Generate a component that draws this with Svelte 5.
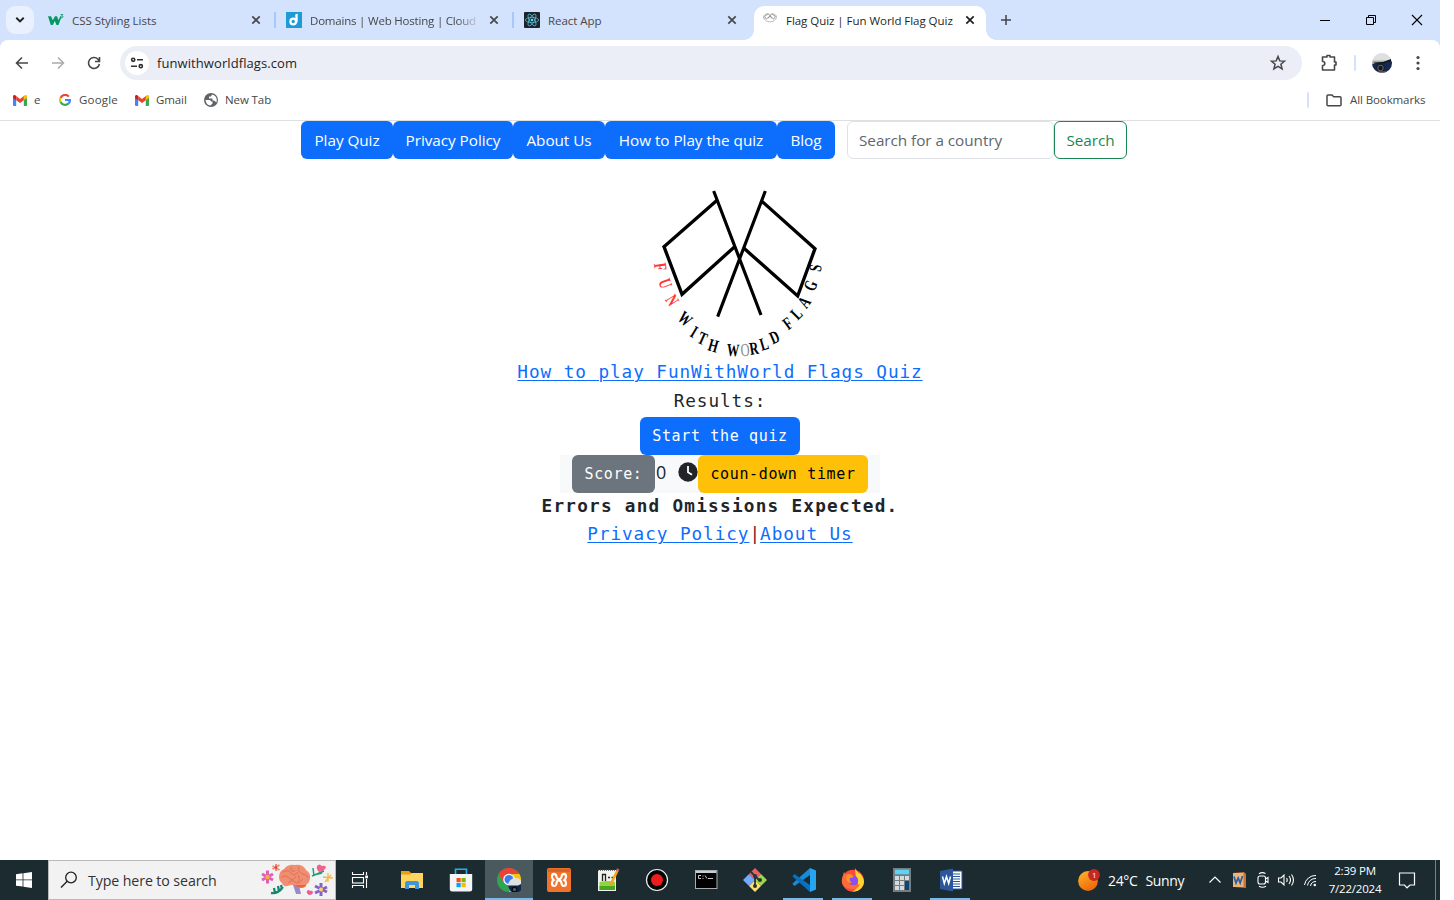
<script>
  const tabs = [
    { icon: 'w3', title: 'CSS Styling Lists' },
    { icon: 'd', title: 'Domains | Web Hosting | Cloud', fade: true },
    { icon: 'react', title: 'React App' },
    { icon: 'flag', title: 'Flag Quiz | Fun World Flag Quiz', active: true }
  ];
  const nav = [
    { label: 'Play Quiz', w: 92 },
    { label: 'Privacy Policy', w: 120 },
    { label: 'About Us', w: 92 },
    { label: 'How to Play the quiz', w: 172 },
    { label: 'Blog', w: 58 }
  ];
  const ring = [
    ['F', 62, 260], ['U', 77, 310], ['N', 97, 360], ['W', 136, 416], ['I', 163, 455], ['T', 188, 475],
    ['H', 220, 496], ['W', 279, 510], ['O', 315, 509], ['R', 342, 504], ['L', 372, 491], ['D', 403, 471],
    ['F', 443, 430], ['L', 469, 400], ['A', 492, 366], ['G', 511, 316], ['S', 525, 264]
  ].map(([ch, x, y], i) => ({ ch, x, y, red: i < 3, thin: i === 8, a: (Math.atan2(297 - x, y - 230) * 180) / Math.PI }));
  const apps = ['tasks', 'folder', 'store', 'chrome', 'xampp', 'npp', 'rec', 'cmd', 'git', 'code', 'firefox', 'calc', 'word'];
  const running = ['code', 'firefox', 'word'];
</script>

{#snippet closeX()}
  <svg class="x" width="10" height="10" viewBox="0 0 10 10"><path d="M1.3 1.3l7.4 7.4M8.7 1.3L1.3 8.7" stroke="currentColor" stroke-width="1.7" /></svg>
{/snippet}

{#snippet gmail()}
  <svg width="14" height="11" viewBox="0 0 14 11">
    <path d="M0 2v8a1 1 0 0 0 1 1h2.2V4z" fill="#4285f4" /><path d="M14 2v8a1 1 0 0 1-1 1h-2.2V4z" fill="#34a853" />
    <path d="M10.8 1.1v4.2L14 3V1.6C14 0 12.4-.3 11.5.4z" fill="#fbbc04" /><path d="M0 1.6V3l3.2 2.3V1L2.5.4C1.5-.3 0 .1 0 1.6z" fill="#c5221f" />
    <path d="M3.2 1.1L7 4l3.8-2.9v4.2L7 8.1 3.2 5.3z" fill="#ea4335" />
  </svg>
{/snippet}

{#snippet avatar()}
  <svg width="20" height="20" viewBox="0 0 20 20">
    <defs><clipPath id="av"><circle cx="10" cy="10" r="10" /></clipPath></defs>
    <g clip-path="url(#av)"><rect width="20" height="20" fill="#dedfe0" /><path d="M0 7.500h20v3H0z" fill="#a9b39b" /><path d="M0 11l7-1.500h7l4-2 2 1v12H0z" fill="#15294e" /><path d="M2 9.500l9-.5 8-3v2l-7 2.500H2z" fill="#10151f" /><circle cx="8.5" cy="15" r="4" fill="#15181d" /><circle cx="8.5" cy="15" r="2.800" fill="none" stroke="#6b6b6b" /><path d="M0 18.500h20v2H0z" fill="#777" /></g>
  </svg>
{/snippet}

{#snippet favicon(name)}
  {#if name === 'w3'}
    <svg width="16" height="16" viewBox="0 0 16 16"><path d="M0 4.300h3l1.800 4 2.200-4h2l1.500 4 1.700-4h1.500L10.500 13h-2L6.800 9l-2 4h-2z" fill="#059862" /><path d="M12.600 2.500h2.200l-1 1.200c1.600 0 1.500 2.200-.2 2.100l-1-.3" fill="none" stroke="#059862" stroke-width=".9" /></svg>
  {:else if name === 'd'}
    <svg width="16" height="16" viewBox="0 0 16 16"><rect width="16" height="16" fill="#1e9ad6" /><circle cx="7.2" cy="9.5" r="2.8" fill="none" stroke="#fff" stroke-width="2.2" /><path d="M9.2 2.4l2.5-.9v8.3l-2 2.3z" fill="#fff" /></svg>
  {:else if name === 'react'}
    <svg width="16" height="16" viewBox="0 0 16 16"><rect width="16" height="16" rx="1" fill="#20232a" /><g fill="none" stroke="#53bdd2" stroke-width=".8"><ellipse cx="8" cy="8" rx="6.6" ry="2.6" /><ellipse cx="8" cy="8" rx="6.6" ry="2.6" transform="rotate(60 8 8)" /><ellipse cx="8" cy="8" rx="6.6" ry="2.6" transform="rotate(120 8 8)" /></g><circle cx="8" cy="8" r="1.3" fill="#61dafb" /></svg>
  {:else}
    <svg class="up" width="16" height="16" viewBox="0 0 16 16"><g fill="none" stroke="#888" stroke-width=".8"><path d="M6.300 3.500l3.500 5M9.700 3.500l-3.500 5M6.500 4L2.500 6.200l1.800 2.900 3.200-2.800M9.500 4l4 2.200-1.800 2.900-3.200-2.800" /><path d="M1.500 7c1 6.500 12 6.500 13 0M1.500 7c0-2 2-3 4.500-3.400M14.500 7c0-2-2-3-4.500-3.400" stroke="#aaa" /></g><path d="M1.300 7l1 2" stroke="#efa0a0" stroke-width=".8" /></svg>
  {/if}
{/snippet}

{#snippet appIcon(name)}
  <svg width="24" height="24" viewBox="0 0 24 24">
    {#if name === 'tasks'}
      <g fill="none" stroke="#fff" stroke-width="1.100"><path d="M4.500 4v2.500h11V4M4.500 20v-2.500h11V20" /><rect x="4.500" y="9.500" width="11" height="5.500" /><path d="M18.500 4v3M18.500 11v9" /></g><rect x="17.200" y="7.500" width="2.800" height="2.800" fill="#fff" />
    {:else if name === 'folder'}
      <path d="M1 3h8l2 2h12v15H1z" fill="#eba10c" /><path d="M1 6.500h9l2-1.500h11v15H1z" fill="#ffd45f" /><path d="M5 21v-6.500L6.500 13h11l1.500 1.500V21h-4v-4H9v4z" fill="#3f96d8" />
    {:else if name === 'store'}
      <path d="M6.500 7V1.200h11V7" fill="none" stroke="#25b1ec" stroke-width="1.600" /><path d="M.8 6h22.400v15a2.500 2.500 0 0 1-2.500 2.500H3.300A2.500 2.500 0 0 1 .8 21z" fill="#f4f5f6" /><rect x="7.500" y="10" width="4.200" height="4.200" fill="#f25022" /><rect x="12.500" y="10" width="4.200" height="4.200" fill="#7fba00" /><rect x="7.500" y="15" width="4.200" height="4.200" fill="#00a4ef" /><rect x="12.500" y="15" width="4.200" height="4.200" fill="#ffb900" />
    {:else if name === 'chrome'}
      <circle cx="12" cy="12" r="12" fill="#2da64f" /><path d="M1.600 6A12 12 0 0 1 22.400 6H12L6.800 15z" fill="#ea4335" /><path d="M22.400 6A12 12 0 0 1 12 24l5.200-9-2-9z" fill="#fbc116" /><circle cx="12" cy="11.500" r="5.800" fill="#fff" /><circle cx="12" cy="11.500" r="4.500" fill="#3b7ded" />
      <g transform="translate(11 10)"><circle cx="7.500" cy="7.500" r="7.500" fill="#dfe2e3" /><path d="M0 7.500h10l4-2 1 2a7.500 7.500 0 0 1-15 0z" fill="#12284b" /><circle cx="6.500" cy="11.500" r="3" fill="#0b0e13" /><circle cx="6.500" cy="11.500" r="1.600" fill="#596169" /></g>
    {:else if name === 'xampp'}
      <rect width="24" height="24" rx="2" fill="#f1732b" /><path d="M1 1h22v3H1z" fill="#ce692b" /><path d="M9.500 8.500Q9 5.800 7 5.800 4.800 6 5 8.800q.2 2 1.700 3.200Q5 13 5 15.500T7.300 18q2-.2 2.200-3M14.500 8.500q.5-2.700 2.500-2.700 2.200.2 2 3-.2 2-1.700 3.200Q19 13 19 15.500T16.700 18q-2-.2-2.200-3M9.500 8.500q.3 2.700 2.500 2.700t2.500-2.700M9.500 15q.3-2.500 2.500-2.500t2.500 2.500" fill="none" stroke="#fff" stroke-width="2.200" />
    {:else if name === 'npp'}
      <path d="M2 2h18v21H2z" fill="#f0f4ec" /><path d="M3.500 14q8-2 15.500 0v8H3.500z" fill="#8fd53c" /><path d="M3.500 18h15.500v4H3.500z" fill="#4ba527" /><path d="M2 2h18" stroke="#444" stroke-width="1.500" stroke-dasharray="1 1" /><path d="M6.500 13V6.500h3V13M12 9.500h2M15.500 9.500h1.500" fill="none" stroke="#222" stroke-width="1.300" /><path d="M21.500 2.500L14.500 17" stroke="#f2a51d" stroke-width="2.600" /><path d="M22.300 .8l-1 2" stroke="#dc5d61" stroke-width="2.600" />
    {:else if name === 'rec'}
      <circle cx="12" cy="12" r="10.500" fill="#050505" stroke="#eee" stroke-width="1.200" /><circle cx="12" cy="12" r="6" fill="#ee1c1c" />
    {:else if name === 'cmd'}
      <rect x="1.500" y="2.500" width="21.500" height="18" fill="#020202" stroke="#a9adb0" /><path d="M2 3h20.500v2H2z" fill="#c9ced5" /><path d="M7 7.500H4.500v3H7M9 7.500v1M9 10v1M11 7.500l2 3M14 10.500h5" fill="none" stroke="#ddd" stroke-width=".9" />
    {:else if name === 'git'}
      <path d="M12 0l6 6-6 6-6-6z" fill="#f05e65" /><path d="M6 6l6 6-6 6-6-6z" fill="#72aaff" /><path d="M18 6l6 6-6 6-6-6z" fill="#a0d64c" /><path d="M12 12l6 6-6 6-6-6z" fill="#ffde70" /><path d="M8 4l4 4v10M12 8l5 5" fill="none" stroke="#263437" stroke-width="1.800" /><circle cx="12" cy="8" r="2" fill="#263437" /><circle cx="12" cy="18" r="2" fill="#263437" /><circle cx="17" cy="12" r="2" fill="#263437" />
    {:else if name === 'code'}
      <path d="M18 0L.3 15.800l2.200 2.200L18 7z" fill="#168cd8" /><path d="M2.500 6L.3 8.200 18 24v-7z" fill="#0870bf" /><path d="M18 0l6 2.500v19L18 24z" fill="#27a4ef" />
    {:else if name === 'firefox'}
      <circle cx="12" cy="12.800" r="11" fill="#ff493d" /><path d="M14.500 0q1 4 5 6 6.500 8 1 14-4 4-9 3.500 7-3 5-11-3-6-2-12.500z" fill="#ffd431" /><path d="M3 4l2 3q2-2 5-1l3 3-5 2 1 3q5 5 10 2-2 6-8 5Q-2 20 1.500 9z" fill="#ff6a3a" /><circle cx="12.300" cy="12.500" r="4.800" fill="#8950ed" /><path d="M5 7q3-2 6 0l2 2-4 1q-1 3 2 5-6 1-6-8z" fill="#ff9427" />
    {:else if name === 'calc'}
      <rect x="3" width="18" height="24" fill="#757d83" /><rect x="5" y="1.700" width="14" height="4.500" fill="#5bd5f7" /><g fill="#d5dade"><path d="M5 8h4v4H5zM10 8h4v4h-4zM15 8h4v4h-4zM5 13h4v4H5zM10 13h4v4h-4zM5 18h4v4H5zM10 18h4v4h-4z" /></g><path d="M15 13h4v9h-4z" fill="#0a4675" />
    {:else}
      <path d="M12 3h11v18H12z" fill="#fff" stroke="#31549b" /><path d="M14 6h7M14 8.500h7M14 11h7M14 13.500h7M14 16h7M14 18.500h7" stroke="#2c579a" /><path d="M1 3l13-2.500v23L1 21z" fill="#2b579a" /><path d="M3.500 8.500l1.800 7 2.200-7 2.200 7 1.800-7" fill="none" stroke="#fff" stroke-width="1.500" />
    {/if}
  </svg>
{/snippet}

<div class="screen">
  <header>
    <div class="strip">
      <div class="drop"><svg width="10" height="6" viewBox="0 0 10 6"><path d="M1.300 .8L5 4.400 8.700 .8" fill="none" stroke="#1f1f1f" stroke-width="1.900" /></svg></div>
      {#each tabs as t, i}
        <div class="tab" class:active={t.active} class:sep={i < 2}>
          {@render favicon(t.icon)}<span class:fade={t.fade}>{t.title}</span>{@render closeX()}
        </div>
      {/each}
      <svg class="plus" width="12" height="12" viewBox="0 0 12 12"><path d="M6 1v10M1 6h10" stroke="#444" stroke-width="1.500" /></svg>
      <div class="win">
        <svg width="12" height="12" viewBox="0 0 12 12"><path d="M1 6.500h10" stroke="#000" /></svg>
        <svg width="12" height="12" viewBox="0 0 12 12"><path d="M1.500 3.500h7v7h-7zM3.500 3.500v-2h7v7h-2" fill="none" stroke="#000" /></svg>
        <svg width="12" height="12" viewBox="0 0 12 12"><path d="M1 1l10 10M11 1L1 11" stroke="#000" stroke-width="1.100" /></svg>
      </div>
    </div>
    <div class="bar"><div class="tools">
      <svg width="14" height="14" viewBox="0 0 14 14"><path d="M13 7H2M7 1.500L1.500 7 7 12.500" fill="none" stroke="#474747" stroke-width="1.600" /></svg>
      <svg width="14" height="14" viewBox="0 0 14 14"><path d="M1 7h11M7 1.500L12.500 7 7 12.500" fill="none" stroke="#ababab" stroke-width="1.500" /></svg>
      <svg width="14" height="14" viewBox="0 0 14 14"><path d="M12.400 8A5.500 5.500 0 1 1 11 3.200L12.400 5M12.500 1v4.500H8" fill="none" stroke="#474747" stroke-width="1.600" /></svg>
      <div class="omni">
        <div class="site"><svg width="14" height="12" viewBox="0 0 14 12"><g fill="none" stroke="#303030" stroke-width="1.600"><circle cx="3.200" cy="2.800" r="1.600" /><path d="M7 2.800h6M1 9.200h6" /><circle cx="10.800" cy="9.200" r="1.600" /></g></svg></div>
        <span>funwithworldflags.com</span>
        <svg class="star" width="18" height="18" viewBox="0 0 18 18"><path d="M9 2.500l1.800 4.400 4.700.3-3.600 3.100 1.200 4.600L9 12.400l-4.100 2.500 1.200-4.600-3.600-3.100 4.700-.3z" fill="none" stroke="#474747" stroke-width="1.500" /></svg>
      </div>
      <svg class="puz" width="18" height="18" viewBox="0 0 18 18"><path d="M2.500 3h4.500V1.500h3V3h4.500v5h1.500v3h-1.500v5h-12v-4.300q2.300-.4 2.300-2.200T2.500 7.300z" fill="none" stroke="#474747" stroke-width="1.600" stroke-linejoin="round" /></svg>
      <i class="vr"></i>
      <div class="ava">{@render avatar()}</div>
      <svg class="dots" width="4" height="16" viewBox="0 0 4 16"><g fill="#474747"><circle cx="2" cy="2.500" r="1.600" /><circle cx="2" cy="8" r="1.600" /><circle cx="2" cy="13.500" r="1.600" /></g></svg>
    </div></div>
    <div class="marks">
      <div class="bm e">{@render gmail()}<span>e</span></div>
      <div class="bm goog"><svg width="12" height="12" viewBox="0 0 12 12"><g fill="none" stroke-width="2.200"><path d="M9.800 2.600A4.900 4.900 0 0 0 1.600 3.900" stroke="#ea4335" /><path d="M1.600 3.800a4.900 4.900 0 0 0 0 4.400" stroke="#fbbc04" /><path d="M1.600 8.100a4.900 4.900 0 0 0 7.800 1.400" stroke="#34a853" /><path d="M6 6h4.900Q11 8.300 9.400 9.600" stroke="#4285f4" /></g></svg><span>Google</span></div>
      <div class="bm gm">{@render gmail()}<span>Gmail</span></div>
      <div class="bm nt"><svg width="14" height="14" viewBox="0 0 14 14"><circle cx="7" cy="7" r="7" fill="#5f6368" /><path d="M1.500 7h4q1.500 0 1.500 1.500h1.500v2l-2 2Q2 12 1.500 7zM8 1.500l-1 2H5V5.500h3.500v2H10l2.500 2q1-5-2-7z" fill="#fff" /></svg><span>New Tab</span></div>
      <i class="vr"></i>
      <svg class="fold" width="16" height="13" viewBox="0 0 16 13"><path d="M1 10.800V2q0-1 1-1h4l1.700 1.700H14q1 0 1 1v7q0 1-1 1H2q-1 0-1-1z" fill="none" stroke="#474747" stroke-width="1.500" /></svg>
      <span class="all">All Bookmarks</span>
    </div>
  </header>

  <nav>
    {#each nav as n}<div class="btn" style:width="{n.w}px"><span>{n.label}</span></div>{/each}
    <div class="field"><span>Search for a country</span></div>
    <div class="go"><span>Search</span></div>
  </nav>

  <main>
    <svg class="logo" width="200" height="180" viewBox="0 0 600 540">
      <g fill="none" stroke="#000" stroke-width="10">
        <path d="M221 33L363 405M376 33L233 410" stroke-width="9.500" />
        <path d="M232 60L72 200 126 343 284 200" />
        <path d="M367 65L525 206 473 348 312 205" />
      </g>
      {#each ring as r}
        <text x="0" y="17" class:red={r.red} class:thin={r.thin} transform="translate({r.x} {r.y}) rotate({r.a}) scale(.76 1.100)">{r.ch}</text>
      {/each}
    </svg>
    <div class="line"><span class="lnk">How to play FunWithWorld Flags Quiz</span></div>
    <div class="line res">Results:</div>
    <div class="start"><span>Start the quiz</span></div>
    <div class="score">
      <div class="sc"><span>Score:</span></div>
      <b class="zero">0</b>
      <svg width="20" height="20" viewBox="0 0 20 20"><circle cx="10" cy="10" r="9.700" fill="#212529" /><path d="M10 4v6.200l4 2.600" fill="none" stroke="#fff" stroke-width="1.800" /></svg>
      <div class="timer"><span>coun-down timer</span></div>
    </div>
    <div class="line err">Errors and Omissions Expected.</div>
    <div class="line pp"><span class="lnk">Privacy Policy</span><em>|</em><span class="lnk">About Us</span></div>
  </main>

  <footer>
    <div class="win-key"><svg width="16" height="16" viewBox="0 0 16 16"><path d="M0 2.200L6.600 1.300v6.200H0zM7.400 1.200L16 0v7.500H7.400zM0 8.300h6.600v6.300L0 13.700zM7.400 8.300H16V16l-8.600-1.200z" fill="#fff" /></svg></div>
    <div class="find">
      <svg width="18" height="18" viewBox="0 0 18 18"><circle cx="11" cy="6.500" r="5.300" fill="none" stroke="#222" stroke-width="1.300" /><path d="M7.200 10.300L1 16.500" stroke="#222" stroke-width="1.400" /></svg>
      <span>Type here to search</span>
      <svg class="brain" width="74" height="34" viewBox="0 0 74 34">
        <path d="M33 22l3 9h5l-2-9z" fill="#9b8ac8" /><path d="M36 23q6 4 10 0l1-5-12 1z" fill="#f0623e" />
        <path d="M19 14q0-6 5-8 4-5 11-4 8-1 11 5 5 3 4 9-1 5-5 6H31q-8 3-9-2-3-2-3-6z" fill="#f08e72" />
        <path d="M23 9q5-3 8 1t7-1M21 15q4-4 8 0t7-2M31 4q-1 5 4 4M39 4q-2 5 4 7t5 4M28 20q4-4 7-1t8-3M38 12q3 4 0 7" fill="none" stroke="#d8694f" stroke-width=".8" />
        <g stroke="#df5fb6" stroke-width="3"><path d="M7.500 7.500v13M2 11l11 6M2 17l11-6" /></g><circle cx="7.500" cy="14" r="2.200" fill="#f4ae3b" />
        <g stroke="#f08a78" stroke-width="2"><path d="M16 1v7M12.500 3l7 4M12.500 6l7-4" /></g><circle cx="16" cy="4.500" r="1.200" fill="#b94848" />
        <g stroke="#8564c7" stroke-width="3"><path d="M61 20v13M55 23l12 6M55 30l12-6" /></g><circle cx="61" cy="26.500" r="2" fill="#ffd25c" />
        <path d="M57 3q2-3 5 0 3-1 4 1-1 4-7 5-3-3-2-6z" fill="#ef6290" /><path d="M53 5l1 8M54 12l8-2M52 13l12-5" stroke="#249c7b" stroke-width="1.500" />
        <path d="M11 30q7 1 12-6M14 25l1 5M18 23l1 5M21 22l1 4" fill="none" stroke="#16876b" stroke-width="2.300" />
        <path d="M47 28q2-2 3 0 2-1 3 1 0 3-4 3-3-2-2-4z" fill="#f15a97" /><path d="M68 10v9M63 14l10 1M65 19l6-7" stroke="#f2b840" stroke-width="1.300" />
      </svg>
    </div>
    {#each apps as a}
      <div class="app {a}" class:run={running.includes(a)} class:cur={a === 'chrome'}>{@render appIcon(a)}</div>
    {/each}
    <div class="weather">
      <svg width="22" height="22" viewBox="0 0 22 22"><defs><linearGradient id="sun" x2=".6" y2="1"><stop stop-color="#ffb62b" /><stop offset="1" stop-color="#ed670c" /></linearGradient></defs><circle cx="10" cy="12" r="9.900" fill="url(#sun)" /><circle cx="16" cy="6" r="5.900" fill="#c8281f" /><text x="16" y="9" font-size="8" text-anchor="middle" fill="#fff">1</text></svg>
      <span>24°C</span><span class="sunny">Sunny</span>
    </div>
    <div class="tray">
      <svg width="14" height="10" viewBox="0 0 14 10"><path d="M1.500 7.500L7 2l5.500 5.500" fill="none" stroke="#fff" stroke-width="1.200" /></svg>
      <svg width="14" height="16" viewBox="0 0 14 16"><path d="M1 1l11-1 2 2v14L2 15z" fill="#ce7233" /><path d="M1 1h10.500v14H1z" fill="#efb477" /><path d="M2 4.500L4 11 6.200 6l2 5L10.500 4" fill="none" stroke="#2260a7" stroke-width="1.700" /></svg>
      <svg width="14" height="18" viewBox="0 0 14 18"><g fill="none" stroke="#fff" stroke-width="1.100"><rect x="2" y="5" width="7.500" height="8" rx="2" /><path d="M9.500 8l2.500-1.500v5L9.500 10M3 2.800Q6 .5 9.500 2.500M3 15.200q3.500 2 7 0" /></g></svg>
      <svg width="18" height="16" viewBox="0 0 18 16"><g fill="none" stroke="#fff" stroke-width="1.100"><path d="M1.500 6H4l3-3v10l-3-3H1.500zM9.500 6q1.500 2 0 4M12 4q3 4 0 8M14.500 2.500q4 5.500 0 11" /></g></svg>
      <svg width="14" height="14" viewBox="0 0 14 14"><g fill="none" stroke="#fff" stroke-width="1"><path d="M1.500 12A11 11 0 0 1 13 2.500M4.500 12.500A8 8 0 0 1 13 5.500M7.500 13A5.500 5.500 0 0 1 13 8.500" /></g><circle cx="11.800" cy="12" r="1.300" fill="#fff" /></svg>
    </div>
    <div class="clock"><span>2:39 PM</span><span class="date">7/22/2024</span></div>
    <svg class="note" width="18" height="18" viewBox="0 0 18 18"><path d="M1.500 2h15v12H12l-3 2.800L6.500 14h-5z" fill="none" stroke="#fff" stroke-width="1.200" /></svg>
    <i class="peek"></i>
  </footer>
</div>

<style>
  :global(body) { margin: 0; background: #fff; overflow: hidden; }
  .screen { width: 1440px; height: 900px; display: flex; flex-direction: column; font-family: 'Open Sans', 'Noto Sans', sans-serif; color: #212529; }
  svg { display: block; flex: none; }
  span, .line { white-space: nowrap; }
  header { height: 120px; border-bottom: 1px solid #dfe0e1; background: #fff; flex: none; }
  .strip { height: 40px; background: #d3e2fd; display: flex; align-items: center; }
  .drop { width: 28px; height: 28px; border-radius: 9px; background: #e9f0fe; margin: 0 6px; display: grid; place-items: center; }
  .tab { width: 238px; height: 40px; box-sizing: border-box; padding: 0 19px 0 8px; display: flex; align-items: center; color: #474747; font-size: 11.5px; letter-spacing: -.04px; position: relative; }
  .tab > span { margin-left: 8px; flex: none; width: 167px; overflow: hidden; line-height: 20px; padding-top: 1px; }
  .tab .x { margin-left: 12px; }
  .tab .fade { mask-image: linear-gradient(90deg, #000 88%, transparent 102%); letter-spacing: -.2px; }
  .sep { background: linear-gradient(#a8c7fa, #a8c7fa) 234px 12px / 2px 16px no-repeat; }
  .active { width: 232px; height: 34px; margin: 6px 0 0; padding: 0 11px 6px 8px; background: #fff; border-radius: 10px 10px 0 0; color: #1f1f1f; }
  .active::before, .active::after { content: ''; position: absolute; bottom: 0; width: 10px; height: 10px; }
  .active::before { left: -10px; background: radial-gradient(circle at 0 0, transparent 9.500px, #fff 10px); }
  .active::after { right: -10px; background: radial-gradient(circle at 100% 0, transparent 9.500px, #fff 10px); }
  .up { margin-top: -4px; }
  .plus { margin-left: 14px; }
  .win { margin-left: auto; display: flex; gap: 34px; padding-right: 17px; }
  .bar { background: #d3e2fd; }
  .tools { height: 46px; display: flex; align-items: center; padding-left: 15px; border-radius: 8px 8px 0 0; background: #fff; }
  .tools > svg:nth-child(2), .tools > svg:nth-child(3) { margin-left: 22px; }
  .omni { width: 1182px; height: 34px; margin-left: 19px; border-radius: 17px; background: #ebeef7; display: flex; align-items: center; font-size: 13px; letter-spacing: .08px; color: #1f1f1f; box-sizing: border-box; padding: 0 15px 0 5px; flex: none; }
  .site { width: 24px; height: 24px; border-radius: 50%; background: #fff; display: grid; place-items: center; margin-right: 8px; }
  .star { margin-left: auto; }
  .puz { margin-left: 18px; }
  .vr { width: 2px; height: 16px; background: #d3e2fd; border-radius: 1px; }
  .tools .vr { margin-left: 16px; }
  .ava { margin-left: 16px; }
  .dots { margin-left: 24px; }
  .marks { height: 28px; display: flex; align-items: center; font-size: 11.500px; color: #474747; letter-spacing: -.1px; }
  .marks span { margin-top: -2px; }
  .bm { display: flex; align-items: center; gap: 7px; }
  .e { width: 46px; padding-left: 13px; }
  .goog { width: 76px; gap: 8px; letter-spacing: .2px; }
  .gm { width: 69px; }
  .nt { width: 80px; }
  .marks .vr { margin-left: auto; }
  .fold { margin-left: 17px; }
  .all { width: 76px; margin: 0 14px 0 8px; }
  nav { height: 38px; display: flex; padding-left: 301px; font-size: 15.300px; letter-spacing: -.05px; flex: none; }
  .btn, .start, .sc, .timer, .go { background: #0d6efd; color: #fff; border-radius: 6px; display: flex; align-items: center; justify-content: center; }
  .field { width: 207px; box-sizing: border-box; border: 1px solid #dee2e6; border-radius: 6px; margin-left: 12px; padding-left: 11px; display: flex; align-items: center; color: #61666b; }
  .go { width: 73px; box-sizing: border-box; border: 1px solid #198754; background: #fff; color: #198754; }
  main { flex: 1; display: flex; flex-direction: column; align-items: center; font-family: 'DejaVu Sans Mono', monospace; padding-top: 21px; }
  .logo { margin-left: 40px; overflow: visible; }
  .logo text { font: bold 49px 'Liberation Serif', serif; text-anchor: middle; }
  .logo .red { fill: #f33; }
  .logo .thin { font-weight: normal; fill: #888; }
  .line { height: 28px; line-height: 28px; font-size: 17.700px; letter-spacing: .93px; margin-top: -2px; }
  .lnk { color: #0d6efd; text-decoration: underline; text-underline-offset: 2px; text-decoration-thickness: 1px; }
  .res { margin-top: 1px; }
  .start { margin-top: 2px; width: 160px; height: 38px; font-size: 15px; letter-spacing: .65px; }
  .score { width: 296px; height: 38px; background: #f8f9fa; padding: 0 12px; display: flex; align-items: center; font-size: 15px; letter-spacing: .65px; }
  .sc { width: 83px; height: 38px; background: #6c757d; }
  .zero { width: 22px; padding-left: 1px; font-weight: 400; font-family: 'Open Sans', sans-serif; font-size: 18px; margin-top: -4px; }
  .score > svg { margin-top: -4px; }
  .timer { width: 170px; height: 38px; background: #ffc107; color: #000; }
  .err { font-weight: 700; letter-spacing: 1.250px; margin-top: -1px; }
  .pp { margin-top: 0; display: flex; }
  .pp em { font-style: normal; color: #842029; letter-spacing: 0; }
  footer { height: 40px; background: #1b2b30; display: flex; align-items: center; color: #fff; flex: none; }
  .win-key { width: 48px; display: grid; place-items: center; }
  .find { width: 288px; height: 40px; box-sizing: border-box; border: 1px solid #b9b9b9; background: #f2f2f2; display: flex; align-items: center; padding-left: 11px; color: #333; font-size: 14.200px; letter-spacing: -.1px; }
  .find span { width: 162px; margin-left: 10px; }
  .brain { margin-left: 10px; }
  .app { width: 49px; height: 40px; display: grid; place-items: center; flex: none; }
  .tasks { width: 48px; margin-right: 3px; }
  .cur { width: 48px; background: linear-gradient(#76b9ed, #76b9ed) 0 38px / 100% 2px no-repeat #49595d; margin-right: 1px; }
  .run { background: linear-gradient(#76b9ed, #76b9ed) 4px 38px / 40px 2px no-repeat; }
  .weather { margin-left: 103px; display: flex; align-items: center; font-size: 14px; letter-spacing: -.35px; width: 108px; flex: none; }
  .weather span { margin-left: 8px; }
  .tray { display: flex; align-items: center; gap: 10px; margin-left: 22px; width: 112px; flex: none; }
  .tray svg:nth-child(4) { margin: 0 -2px 0 -3px; }
  .clock { width: 60px; margin-left: 5px; display: flex; flex-direction: column; align-items: center; font-size: 11.500px; line-height: 18px; letter-spacing: -.2px; flex: none; }
  .note { margin-left: 13px; }
  .peek { width: 1px; height: 40px; background: #778286; margin-left: auto; margin-right: 4px; }
</style>
